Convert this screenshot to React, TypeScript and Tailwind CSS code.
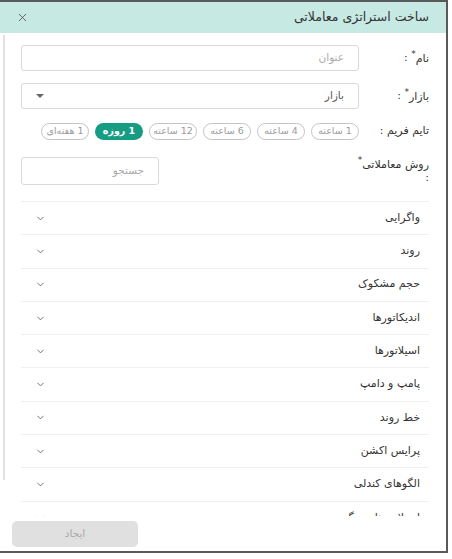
import { X, ChevronDown } from "lucide-react";

const timeframes = ["1 ساعته", "4 ساعته", "6 ساعته", "12 ساعته", "1 روزه", "1 هفته‌ای"];
const selectedTimeframe = "1 روزه";

const sections = [
  "واگرایی",
  "روند",
  "حجم مشکوک",
  "اندیکاتورها",
  "اسیلاتورها",
  "پامپ و دامپ",
  "خط روند",
  "پرایس اکشن",
  "الگوهای کندلی",
  "اسیلاتورهای دیگر",
];

function Label({ text, br }: { text: string; br?: boolean }) {
  return (
    <div className="w-[58px] shrink-0 text-[11px] leading-[14px] text-[#333]">
      <span className="whitespace-nowrap">
        {text}
        <sup className="text-[9px]">*</sup>
      </span>
      {br ? <div>:</div> : <span> :</span>}
    </div>
  );
}

export default function App() {
  return (
    <div
      dir="rtl"
      className="w-[448px] h-[553px] bg-white flex flex-col border-t-2 border-r-2 border-b-2 border-[#5a5a5a] overflow-hidden"
      style={{ fontFamily: '"DejaVu Sans", sans-serif' }}
    >
      {/* Header */}
      <div className="h-[31px] shrink-0 bg-[#c6e9e3] flex items-center justify-between pr-[17px] pl-[16px]">
        <span className="text-[12.5px] text-[#333]">ساخت استراتژی معاملاتی</span>
        <X className="w-[13px] h-[13px] text-[#555]" strokeWidth={1.6} />
      </div>

      {/* Body */}
      <div className="flex-1 min-h-0 flex flex-row-reverse">
        <div className="w-[5px] shrink-0 pt-[2px] pb-[36px] pl-[2px]">
          <div className="h-full w-[2px] bg-[#e2e2e2]" />
        </div>
        <div className="flex-1 min-w-0 overflow-hidden pr-[17px] pl-[16px] pt-[12px]">
          {/* Name */}
          <div className="flex items-center gap-[12px]">
            <Label text="نام" />
            <div className="flex-1 h-[26px] border border-[#dadada] rounded-[3px] flex items-center px-[14px] text-[10.5px] text-[#aaa]">
              عنوان
            </div>
          </div>

          {/* Market */}
          <div className="flex items-center gap-[12px] mt-[12px]">
            <Label text="بازار" />
            <div className="flex-1 h-[26px] border border-[#dadada] rounded-[3px] flex items-center justify-between px-[14px] text-[10.5px] text-[#555]">
              <span>بازار</span>
              <span className="w-0 h-0 border-l-[4px] border-r-[4px] border-t-[4px] border-l-transparent border-r-transparent border-t-[#666]" />
            </div>
          </div>

          {/* Timeframe */}
          <div className="flex items-center gap-[12px] mt-[14px]">
            <div className="w-[58px] shrink-0 text-[11px] text-[#333] whitespace-nowrap">تایم فریم :</div>
            <div className="flex gap-[6px]">
              {timeframes.map((t) => (
                <div
                  key={t}
                  className={
                    t === selectedTimeframe
                      ? "h-[17px] w-[48px] rounded-full bg-[#179c84] text-white text-[9.5px] font-bold flex items-center justify-center"
                      : "h-[17px] w-[48px] rounded-full border border-[#c4c4c4] text-[#9a9a9a] text-[9.5px] flex items-center justify-center"
                  }
                >
                  {t}
                </div>
              ))}
            </div>
          </div>

          {/* Trading method */}
          <div className="flex items-start gap-[12px] mt-[17px]">
            <Label text="روش معاملاتی" br />
            <div className="w-[138px] h-[28px] border border-[#dadada] rounded-[3px] flex items-center px-[14px] text-[10.5px] text-[#aaa] mr-[200px]">
              جستجو
            </div>
          </div>

          {/* Accordion */}
          <div className="mt-[16px]">
            {sections.map((s) => (
              <div
                key={s}
                className="h-[33.3px] border-t border-[#efefef] flex items-center justify-between pr-[9px] pl-[14px]"
              >
                <span className="text-[11px] text-[#333]">{s}</span>
                <ChevronDown className="w-[11px] h-[11px] text-[#666]" strokeWidth={2} />
              </div>
            ))}
          </div>
        </div>
      </div>

      {/* Footer */}
      <div className="h-[35px] shrink-0 flex items-start pt-[5px] pl-[12px]" dir="ltr">
        <div className="w-[126px] h-[26px] rounded-[5px] bg-[#e0e0e0] text-[#a8a8a8] text-[10.5px] flex items-center justify-center">
          ایجاد
        </div>
      </div>
    </div>
  );
}
